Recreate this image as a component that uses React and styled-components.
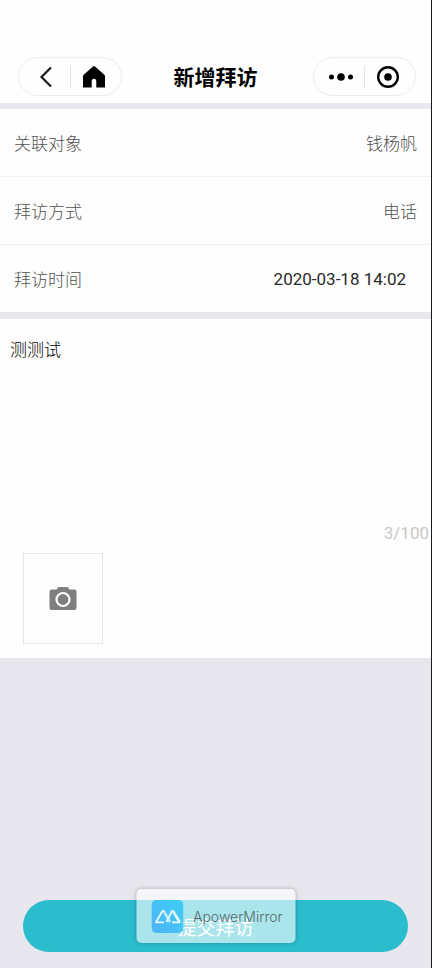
import React, { useState } from 'react';
import styled, { createGlobalStyle } from 'styled-components';

const GlobalStyle = createGlobalStyle`
  * {
    box-sizing: border-box;
  }

  body {
    margin: 0;
    background: #e8e7ed;
    font-family: Roboto, 'Noto Sans CJK SC', sans-serif;
  }

  button,
  input,
  textarea {
    font-family: inherit;
  }
`;

const Page = styled.div`
  display: flex;
  flex-direction: column;
  min-height: 100vh;
  border-right: 1px solid #1c1c1e;
`;

const Header = styled.header`
  display: flex;
  align-items: center;
  justify-content: space-between;
  padding: 57px 15px 7px 18px;
  background: #fefefe;
`;

const Title = styled.h1`
  margin: 0;
  padding: 3px 4px 0 0;
  font-size: 21px;
  line-height: 32px;
  font-weight: 700;
  color: #000;
`;

const Capsule = styled.div`
  display: flex;
  align-items: center;
  width: ${(props) => props.$width};
  height: 39px;
  padding: 0 4px;
  border: 1px solid #ededed;
  border-radius: 20px;
`;

const CapsuleButton = styled.button`
  display: flex;
  flex: 1;
  align-items: center;
  justify-content: center;
  height: 100%;
  padding: 0;
  border: none;
  background: none;
  color: #000;
`;

const CapsuleLine = styled.span`
  width: 1px;
  height: 22px;
  background: #e4e4e4;
`;

const Form = styled.form`
  display: flex;
  flex: 1;
  flex-direction: column;
  margin: 0;
`;

const Fields = styled.div`
  margin: 6px 0 7px;
  background: #fefefe;
`;

const Row = styled.div`
  display: flex;
  align-items: center;
  height: 68px;
  padding: 0 ${(props) => (props.$inset ? '25px' : '14px')} 0 14px;
  border-bottom: 1px solid #f3f3f4;

  &:last-child {
    height: 67px;
    border-bottom: none;
  }
`;

const Label = styled.label`
  font-size: 17px;
  font-weight: 300;
  color: #505050;
`;

const Value = styled.input`
  flex: 1;
  min-width: 0;
  padding: 0;
  border: none;
  outline: none;
  background: none;
  text-align: right;
  font-size: 17px;
  font-weight: ${(props) => (props.$dark ? 400 : 300)};
  color: ${(props) => (props.$dark ? '#2a2a2a' : '#505050')};
`;

const Content = styled.section`
  display: flex;
  flex-direction: column;
  padding-bottom: 14px;
  background: #fefefe;
`;

const Note = styled.textarea`
  display: block;
  width: 100%;
  height: 201px;
  padding: 19px 10px 0;
  border: none;
  outline: none;
  resize: none;
  background: none;
  font-size: 17px;
  line-height: 24px;
  font-weight: 300;
  color: #000;
`;

const Counter = styled.span`
  align-self: flex-end;
  padding-right: 2px;
  font-size: 17px;
  line-height: 26px;
  color: #c8c8ca;
`;

const PhotoButton = styled.button`
  display: flex;
  align-items: center;
  justify-content: center;
  width: 80px;
  height: 91px;
  margin: 7px 0 0 23px;
  padding: 0;
  border: 1px solid #e6e6e8;
  background: none;
`;

const Footer = styled.div`
  position: relative;
  margin-top: auto;
  padding: 0 23px 16px;
`;

const Submit = styled.button`
  display: block;
  width: 100%;
  height: 52px;
  padding: 0;
  border: none;
  border-radius: 26px;
  background: #2bbdcd;
  font-size: 19px;
  color: #fff;
`;

const Toast = styled.div`
  position: absolute;
  bottom: 25px;
  left: 50%;
  display: flex;
  align-items: center;
  gap: 10px;
  width: 159px;
  height: 54px;
  padding-left: 15px;
  border-radius: 5px;
  background: rgba(255, 255, 255, 0.6);
  box-shadow: 0 0 4px rgba(0, 0, 0, 0.25);
  transform: translateX(-50%);
  pointer-events: none;
`;

const ToastText = styled.span`
  font-family: Inter, sans-serif;
  font-size: 14px;
  font-weight: 300;
  color: #566a6c;
`;

function BackIcon() {
  return (
    <svg width="14" height="22" viewBox="0 0 14 22" fill="none" aria-hidden="true">
      <path d="M12 1.500 2.500 11l9.500 9.500" stroke="#1c1c1c" strokeWidth="2.200" />
    </svg>
  );
}

function HomeIcon() {
  return (
    <svg width="24" height="24" viewBox="0 0 24 24" aria-hidden="true">
      <path
        d="M11 1.500Q12 .7 13 1.500L22.300 9.800Q23 10.400 23 11.300V22.500H14.300V17Q14.300 13.800 12 13.800T9.700 17V22.500H1V11.300Q1 10.400 1.700 9.800Z"
        fill="#000"
      />
    </svg>
  );
}

function MoreIcon() {
  return (
    <svg width="26" height="10" viewBox="0 0 26 10" aria-hidden="true">
      <circle cx="3.500" cy="5" r="2.500" />
      <circle cx="13" cy="5" r="3.800" />
      <circle cx="22.500" cy="5" r="2.500" />
    </svg>
  );
}

function CloseIcon() {
  return (
    <svg width="24" height="24" viewBox="0 0 24 24" aria-hidden="true">
      <circle cx="12" cy="12" r="9.800" fill="none" stroke="#000" strokeWidth="2.400" />
      <circle cx="12" cy="12" r="3.800" />
    </svg>
  );
}

function CameraIcon() {
  return (
    <svg width="28" height="24" viewBox="0 0 28 24" aria-hidden="true">
      <path
        d="M8.500 1Q9 0 10 0H18Q19 0 19.500 1L20.500 2.500H25.500Q27.500 2.500 27.500 4.500V21Q27.500 23 25.500 23H2.500Q.5 23 .5 21V4.500Q.5 2.500 2.500 2.500H7.500Z"
        fill="#7f7f81"
      />
      <circle cx="14" cy="12.500" r="6.500" fill="none" stroke="#fff" strokeWidth="2.200" />
    </svg>
  );
}

function MirrorLogo() {
  return (
    <svg width="32" height="33" viewBox="0 0 32 33" opacity="0.85" aria-hidden="true">
      <defs>
        <linearGradient id="mirror" x1="1" y1="0" x2="0" y2="1">
          <stop offset="0" stopColor="#2ccbf5" />
          <stop offset="1" stopColor="#3fabfb" />
        </linearGradient>
      </defs>
      <rect width="32" height="33" rx="5" fill="url(#mirror)" />
      <g fill="none" stroke="#f0fbff" strokeWidth="1.800" strokeLinejoin="round">
        <path d="M12.500 22.300H4.500L11 11H12.500" />
        <path d="M12.200 11 18.500 22" strokeWidth="2.600" opacity="0.75" />
        <path d="M15 22 20.500 11H21.500" />
        <path d="M21.500 11 28 22" strokeWidth="2.600" />
        <path d="M20.500 22.300H28.500" />
      </g>
    </svg>
  );
}

function App() {
  const [note, setNote] = useState('测测试');

  return (
    <>
      <GlobalStyle />
      <Page>
        <Header>
          <Capsule $width="104px">
            <CapsuleButton type="button" aria-label="返回">
              <BackIcon />
            </CapsuleButton>
            <CapsuleLine />
            <CapsuleButton type="button" aria-label="首页">
              <HomeIcon />
            </CapsuleButton>
          </Capsule>
          <Title>新增拜访</Title>
          <Capsule $width="103px">
            <CapsuleButton type="button" aria-label="更多">
              <MoreIcon />
            </CapsuleButton>
            <CapsuleLine />
            <CapsuleButton type="button" aria-label="关闭">
              <CloseIcon />
            </CapsuleButton>
          </Capsule>
        </Header>
        <Form onSubmit={(e) => e.preventDefault()}>
          <Fields>
            <Row>
              <Label htmlFor="target">关联对象</Label>
              <Value id="target" defaultValue="钱杨帆" readOnly />
            </Row>
            <Row>
              <Label htmlFor="method">拜访方式</Label>
              <Value id="method" defaultValue="电话" readOnly />
            </Row>
            <Row $inset>
              <Label htmlFor="time">拜访时间</Label>
              <Value id="time" defaultValue="2020-03-18 14:02" readOnly $dark />
            </Row>
          </Fields>
          <Content>
            <Note
              aria-label="拜访内容"
              maxLength={100}
              value={note}
              onChange={(e) => setNote(e.target.value)}
            />
            <Counter>{note.length}/100</Counter>
            <PhotoButton type="button" aria-label="拍照">
              <CameraIcon />
            </PhotoButton>
          </Content>
          <Footer>
            <Submit type="submit">提交拜访</Submit>
            <Toast>
              <MirrorLogo />
              <ToastText>ApowerMirror</ToastText>
            </Toast>
          </Footer>
        </Form>
      </Page>
    </>
  );
}

export default App;
